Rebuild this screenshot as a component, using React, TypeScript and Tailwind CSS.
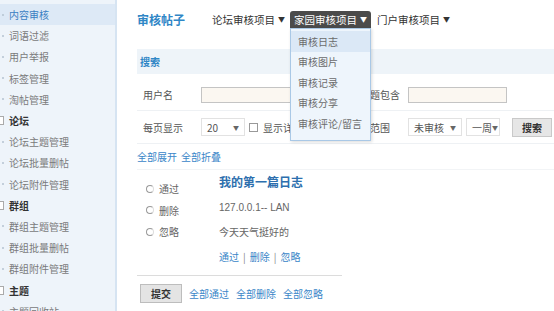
import React from "react";

const side: { t: string; h?: boolean; a?: boolean }[] = [
  { t: "内容审核", a: true },
  { t: "词语过滤" },
  { t: "用户举报" },
  { t: "标签管理" },
  { t: "淘帖管理" },
  { t: "论坛", h: true },
  { t: "论坛主题管理" },
  { t: "论坛批量删帖" },
  { t: "论坛附件管理" },
  { t: "群组", h: true },
  { t: "群组主题管理" },
  { t: "群组批量删帖" },
  { t: "群组附件管理" },
  { t: "主题", h: true },
  { t: "主题回收站" },
];

const menu = ["审核日志", "审核图片", "审核记录", "审核分享", "审核评论/留言"];

function Arrow() {
  return <span className="ml-[3px] text-[7px] leading-none">▼</span>;
}

function Select({ label, w }: { label: string; w: string }) {
  return (
    <div className={`${w} h-[18px] flex items-center justify-between px-[5px] bg-white border border-[#e2e2e2] text-[#555] whitespace-nowrap`}>
      <span className="text-[10px]">{label}</span>
      <span className="text-[6px] text-[#666]">▼</span>
    </div>
  );
}

export default function App() {
  return (
    <div className="flex w-[554px] h-[311px] overflow-hidden bg-white text-[10px] font-['Noto_Sans_CJK_SC',sans-serif]">
      <aside className="w-[117px] shrink-0 bg-[#eef4fa] border-r-2 border-[#d6e4f2] pt-[4px]">
        {side.map((s) => (
          <div
            key={s.t}
            className={`h-[21.2px] flex items-center ${s.a ? "bg-[#dde9f6] text-[#3a80c2]" : s.h ? "text-[#333] font-bold" : "text-[#7a7a7a]"}`}
          >
            {s.h ? (
              <span className="-ml-[5px] mr-[5px] w-[9px] h-[9px] border border-[#aaa] bg-white" />
            ) : (
              <span className="ml-[2px] mr-[5px] w-[2px] h-[2px] rounded-full bg-[#b5c3d0]" />
            )}
            <span>{s.t}</span>
          </div>
        ))}
      </aside>

      <main className="relative flex-1 pl-[20px]">
        <div className="mt-[11px] h-[17px] flex items-center text-[10.5px] text-[#333]">
          <span className="text-[12px] font-bold text-[#2f86c6] w-[75px]">审核帖子</span>
          <span className="flex items-center">论坛审核项目<Arrow /></span>
          <span className="ml-[5px] h-[17px] px-[4px] flex items-center bg-[#4b4b4b] text-white rounded-t-[3px]">家园审核项目<Arrow /></span>
          <span className="ml-[6px] flex items-center">门户审核项目<Arrow /></span>
        </div>

        <div className="absolute left-[173px] top-[28px] w-[81px] h-[113px] bg-[#eef5fc] border border-[#a9c8e6] shadow-[1px_1px_3px_rgba(0,0,0,0.15)] z-10 pt-[2px]">
          {menu.map((m, i) => (
            <div key={m} className={`h-[20.5px] flex items-center pl-[7px] text-[#6b6b6b] ${i === 0 ? "bg-[#dbe8f6]" : ""}`}>
              {m}
            </div>
          ))}
        </div>

        <div className="mt-[21px] h-[25px] flex items-center pl-[3px] bg-[#eef4f9] font-bold text-[#2f86c6]">搜索</div>

        <div className="mt-[5px] h-[32px] flex items-center pl-[6px] border-b border-[#eef1f4] text-[#555]">
          <span className="w-[58px]">用户名</span>
          <div className="w-[100px] h-[16px] bg-[#fbf7f1] border border-[#c4c4c4]" />
          <span className="w-[107px] text-right pr-[8px]">标题包含</span>
          <div className="w-[99px] h-[16px] bg-[#fbf7f1] border border-[#c4c4c4]" />
        </div>

        <div className="h-[33px] flex items-center pl-[6px] border-b border-[#eef1f4] text-[#555]">
          <span className="w-[58px]">每页显示</span>
          <Select label="20" w="w-[44px]" />
          <span className="ml-[4px] w-[9px] h-[9px] border border-[#999] bg-white" />
          <span className="ml-[5px]">显示详细</span>
          <span className="ml-auto mr-[18px]">时间范围</span>
          <div className="w-[146px] flex items-center">
            <Select label="未审核" w="w-[54px]" />
            <div className="ml-[4px]"><Select label="一周" w="w-[34px]" /></div>
            <button className="ml-[12px] w-[40px] h-[19px] bg-[#e6e6e6] border border-[#c9c9c9] font-bold text-[#333] text-[10px]">搜索</button>
          </div>
        </div>

        <div className="h-[26px] flex items-center gap-[4px] text-[#3a86c8] border-b border-[#f2f4f6]">
          <span>全部展开</span>
          <span>全部折叠</span>
        </div>

        <div className="h-[106px] flex border-b border-[#dcdcdc] w-[205px]">
          <div className="w-[82px] pl-[9px] pt-[8px] text-[#666]">
            {["通过", "删除", "忽略"].map((r) => (
              <div key={r} className="h-[21.5px] flex items-center">
                <span className="w-[8px] h-[8px] rounded-full border border-[#999] border-r-[#ddd] mr-[5px]" />
                {r}
              </div>
            ))}
          </div>
          <div className="flex-1 text-[#666]">
            <div className="h-[24.7px] flex items-center text-[12px] font-bold text-[#2d6fae]">我的第一篇日志</div>
            <div className="h-[24.7px] flex items-center font-['Liberation_Sans',sans-serif] text-[10px]">127.0.0.1-- LAN</div>
            <div className="h-[24.7px] flex items-center">今天天气挺好的</div>
            <div className="h-[24.7px] flex items-center text-[#3a86c8]">
              通过<span className="mx-[4px] text-[#888]">|</span>删除<span className="mx-[4px] text-[#888]">|</span>忽略
            </div>
          </div>
        </div>

        <div className="pt-[8px] pl-[3px] flex items-center gap-[7px] text-[#3a86c8]">
          <button className="w-[42px] h-[19px] bg-[#e4e4e4] border border-[#bdbdbd] font-bold text-[#333] text-[10px]">提交</button>
          <span>全部通过</span>
          <span>全部删除</span>
          <span>全部忽略</span>
        </div>
      </main>
    </div>
  );
}
